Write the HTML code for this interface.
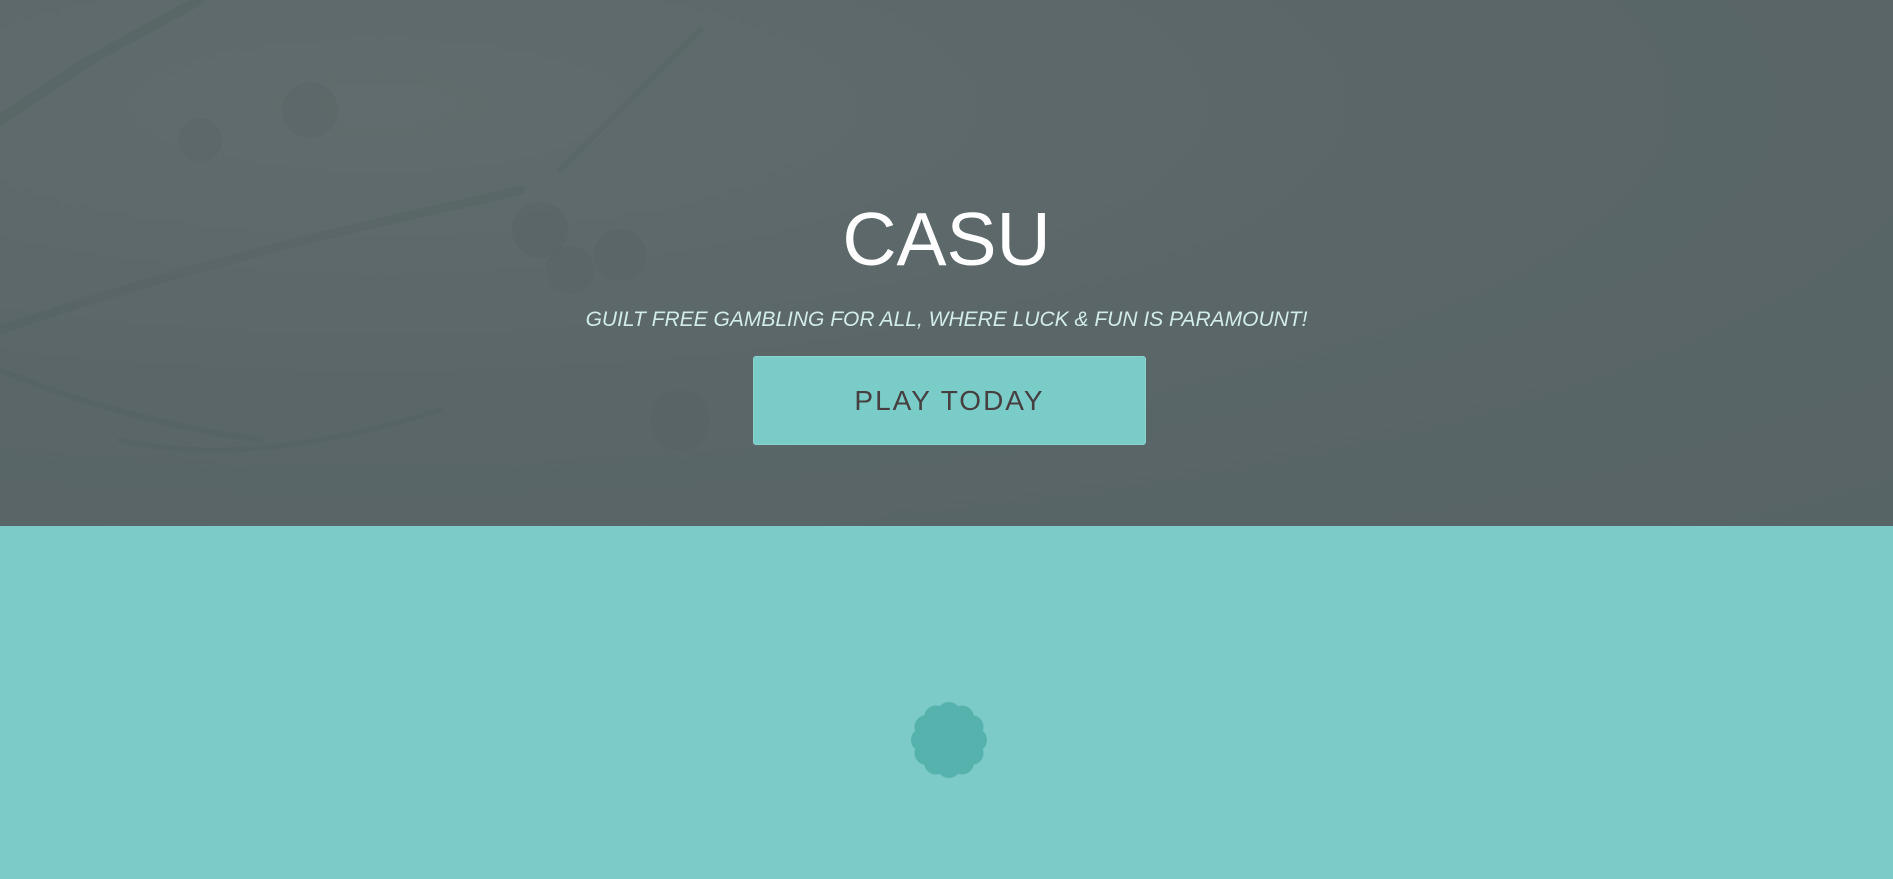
<!DOCTYPE html>
<html><head><meta charset="utf-8"><style>
html,body{margin:0;padding:0;width:1893px;height:879px;overflow:hidden;font-family:"Liberation Sans",Arial,sans-serif}
.hero{position:absolute;left:0;top:0;width:1893px;height:526px;background:radial-gradient(ellipse at 20% 20%,#606c6d 0%,#5a6668 50%,#576466 100%);overflow:hidden}
.bottom{position:absolute;left:0;top:526px;width:1893px;height:353px;background:#7ccbc8}
h1{position:absolute;left:0;width:1893px;top:191px;margin:0;text-align:center;color:#fff;font-weight:400;font-size:75px;line-height:96px}
.sub{position:absolute;left:0;width:1893px;top:307px;text-align:center;color:#d2ecea;font-style:italic;font-size:21px;line-height:26px}
.btn{position:absolute;left:753px;top:356px;width:393px;height:89px;box-sizing:border-box;background:#7accc8;border:1px solid #8ad4d0;border-radius:3px;color:#473f3f;font-size:28px;letter-spacing:2px;text-align:center;line-height:87px}
</style></head><body>
<div class="hero">
<svg width="1893" height="526" style="position:absolute;left:0;top:0" fill="none" stroke="#53605f" stroke-opacity=".3" stroke-linecap="round">
<path d="M0 120 L90 60 L200 0" stroke-width="10"/>
<path d="M0 330 Q200 260 480 200 L520 190" stroke-width="9"/>
<path d="M0 370 Q120 420 260 440" stroke-width="6"/>
<path d="M120 440 Q250 470 440 410" stroke-width="5"/>
<path d="M560 170 Q640 90 700 30" stroke-width="6"/>
<g fill="#536060" fill-opacity=".25" stroke="none">
<circle cx="540" cy="230" r="28"/><circle cx="570" cy="270" r="24"/><circle cx="620" cy="255" r="26"/>
<circle cx="200" cy="140" r="22"/><circle cx="310" cy="110" r="28"/><circle cx="680" cy="420" r="30"/>
</g>
</svg>
<h1>CASU</h1>
<div class="sub">GUILT FREE GAMBLING FOR ALL, WHERE LUCK &amp; FUN IS PARAMOUNT!</div>
<div class="btn">PLAY TODAY</div>
</div>
<div class="bottom"></div>
<svg width="90" height="90" style="position:absolute;left:904px;top:695px" viewBox="-45 -45 90 90" fill="#55b2ad">
<circle r="28"/>
<circle cx="0" cy="-26" r="12"/><circle cx="13" cy="-22.5" r="12"/><circle cx="22.5" cy="-13" r="12"/>
<circle cx="26" cy="0" r="12"/><circle cx="22.5" cy="13" r="12"/><circle cx="13" cy="22.5" r="12"/>
<circle cx="0" cy="26" r="12"/><circle cx="-13" cy="22.5" r="12"/><circle cx="-22.5" cy="13" r="12"/>
<circle cx="-26" cy="0" r="12"/><circle cx="-22.5" cy="-13" r="12"/><circle cx="-13" cy="-22.5" r="12"/>
</svg>
</body></html>
